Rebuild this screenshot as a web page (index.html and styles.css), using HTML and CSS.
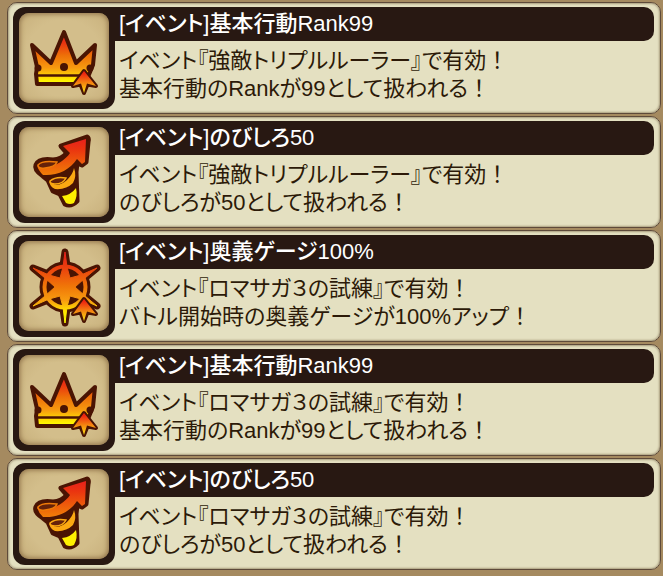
FILE: index.html
```
<!DOCTYPE html>
<html lang="ja">
<head>
<meta charset="utf-8">
<meta name="viewport" content="width=device-width, initial-scale=1">
<title>イベント</title>
<link rel="stylesheet" href="styles.css">
</head>
<body>
<svg class="defs" aria-hidden="true">
  <defs>
    <linearGradient id="fire" gradientUnits="userSpaceOnUse" x1="0" y1="20" x2="0" y2="70">
      <stop offset="0" stop-color="#e8201c"/>
      <stop offset=".2" stop-color="#ea3410"/>
      <stop offset=".45" stop-color="#ee7008"/>
      <stop offset=".7" stop-color="#f79a10"/>
      <stop offset=".9" stop-color="#ffe000"/>
      <stop offset="1" stop-color="#ffff00"/>
    </linearGradient>
    <linearGradient id="glow" gradientUnits="userSpaceOnUse" x1="0" y1="12" x2="0" y2="80">
      <stop offset="0" stop-color="#e8201c"/>
      <stop offset=".15" stop-color="#ea3410"/>
      <stop offset=".5" stop-color="#f07808"/>
      <stop offset=".7" stop-color="#f89c10"/>
      <stop offset=".85" stop-color="#ffe000"/>
      <stop offset="1" stop-color="#ffff00"/>
    </linearGradient>
    <linearGradient id="spark" gradientUnits="userSpaceOnUse" x1="0" y1="60" x2="0" y2="81">
      <stop offset="0" stop-color="#ee2010"/>
      <stop offset=".5" stop-color="#f58a10"/>
      <stop offset="1" stop-color="#ffee10"/>
    </linearGradient>
    <symbol id="boost" viewBox="0 0 90 90">
      <path d="M65 58 L77 73 L68.500 71.500 L65 80 L61.500 71.500 L54 73 Z" fill="#4a1403" stroke="#4a1403" stroke-width="4" stroke-linejoin="round"/>
      <path d="M65 58 L77 73 L68 70.500 L65 80 L62 70.500 L54 73 Z" fill="url(#spark)"/>
    </symbol>
    <symbol id="crown" viewBox="0 0 90 90">
      <g stroke="#4a1403" stroke-width="4" stroke-linejoin="round">
        <path d="M45 19 L57 50 L76 32 L74 52 L69 64 L68 71 H18 L17 61 L18 54 L13 32 L32 50 Z" fill="url(#fire)"/>
        <path d="M17 62.500 H68" fill="none" stroke-width="2.500"/>
      </g>
      <circle cx="45" cy="54" r="4" fill="#4a1403"/>
      <circle cx="19" cy="55" r="3.500" fill="#4a1403"/>
      <circle cx="71" cy="55" r="3.500" fill="#4a1403"/>
      <use href="#boost"/>
    </symbol>
    <symbol id="spiral" viewBox="0 0 90 90">
      <g fill="#4a1403" stroke="#4a1403" stroke-width="5" stroke-linejoin="round">
        <path d="M42 19 L68 10 Q70 11 69 15 L67 35 L63 38 L58 36 L57 45 L58 74 Q52 80 46 77 L41 67 L34 64 L29 53 L24 49 Q15 43 17 38 Q20 31 34 33 Q43 32 48 26 Z"/>
      </g>
      <path d="M43 69 Q52 68 57 61 Q59 69 55 76 Q51 78 47 76 Z" fill="#fff000"/>
      <path d="M30 54 Q38 62 48 53 Q54 47 55 41 Q58 49 54 56 Q47 63 36 62 Q31 60 30 54 Z" fill="#fba812"/>
      <path d="M31 54 Q37 49 47 51 Q44 57 36 57 Q31 57 31 54 Z" fill="#65220a" stroke="#fba812" stroke-width="1.500"/>
      <path d="M44 19 L67 12 L66 35 L63 37 L58 32 C51 43 38 49 24 48 Q19 43 18 38 C29 45 46 34 51 26 Z" fill="url(#glow)"/>
      <path d="M19 38 Q23 33 38 35 Q36 40 26 41 Q19 42 19 38 Z" fill="#65220a" stroke="#ee7a08" stroke-width="1.500"/>
    </symbol>
    <symbol id="wheel" viewBox="0 0 90 90">
      <g fill="#4a1403" stroke="#4a1403" stroke-linejoin="round">
        <circle cx="46" cy="46" r="24" stroke-width="3"/>
        <path d="M46 11 L50 38 L78 27 L55 46 L78 65 L50 54 L46 82 L42 54 L14 65 L37 46 L14 27 L42 38 Z" stroke-width="7"/>
      </g>
      <circle cx="46" cy="46" r="20.500" fill="none" stroke="url(#glow)" stroke-width="4"/>
      <path d="M46 11 L48 26 L51 37 L62 34 L78 27 L66 37 L56 46 L66 55 L78 65 L62 58 L51 55 L48 66 L46 82 L44 66 L41 55 L30 58 L14 65 L26 55 L36 46 L26 37 L14 27 L30 34 L41 37 L44 26 Z" fill="url(#glow)" stroke="url(#glow)" stroke-width="1" stroke-linejoin="round"/>
      <use href="#boost"/>
    </symbol>
  </defs>
</svg>
<ul class="skills">
  <li class="card">
    <div class="frame"><svg class="icon" aria-hidden="true"><use href="#crown"/></svg></div>
    <div class="content">
      <h2 class="title">[イベント]基本行動Rank99</h2>
      <p class="text">イベント『強敵トリプルルーラー』で有効<span class="mark">！</span><br>基本行動のRankが99として扱われる<span class="mark">！</span></p>
    </div>
  </li>
  <li class="card">
    <div class="frame"><svg class="icon" aria-hidden="true"><use href="#spiral"/></svg></div>
    <div class="content">
      <h2 class="title">[イベント]のびしろ50</h2>
      <p class="text">イベント『強敵トリプルルーラー』で有効<span class="mark">！</span><br>のびしろが50として扱われる<span class="mark">！</span></p>
    </div>
  </li>
  <li class="card">
    <div class="frame"><svg class="icon" aria-hidden="true"><use href="#wheel"/></svg></div>
    <div class="content">
      <h2 class="title">[イベント]奥義ゲージ100%</h2>
      <p class="text">イベント『ロマサガ３の試練』で有効<span class="mark">！</span><br>バトル開始時の奥義ゲージが100%アップ<span class="mark">！</span></p>
    </div>
  </li>
  <li class="card">
    <div class="frame"><svg class="icon" aria-hidden="true"><use href="#crown"/></svg></div>
    <div class="content">
      <h2 class="title">[イベント]基本行動Rank99</h2>
      <p class="text">イベント『ロマサガ３の試練』で有効<span class="mark">！</span><br>基本行動のRankが99として扱われる<span class="mark">！</span></p>
    </div>
  </li>
  <li class="card">
    <div class="frame"><svg class="icon" aria-hidden="true"><use href="#spiral"/></svg></div>
    <div class="content">
      <h2 class="title">[イベント]のびしろ50</h2>
      <p class="text">イベント『ロマサガ３の試練』で有効<span class="mark">！</span><br>のびしろが50として扱われる<span class="mark">！</span></p>
    </div>
  </li>
</ul>
</body>
</html>
```
FILE: styles.css
```
* {
  box-sizing: border-box;
}

body {
  margin: 0;
  background: #a58a60;
  font-family: "Liberation Sans", "Noto Sans CJK JP", sans-serif;
  font-feature-settings: "palt";
  color: #2c1a08;
}

.defs {
  position: absolute;
  width: 0;
  height: 0;
}

.skills {
  display: flex;
  flex-direction: column;
  gap: 2px;
  margin: 0;
  padding: 2px 2px 2px 7px;
  list-style: none;
}

.card {
  display: flex;
  padding: 4px 6px 4px 5px;
  border: 1px solid #5e4a3a;
  border-radius: 10px;
  background: #e4e0c1;
  box-shadow: inset 0 0 2px 1px #a89c7c;
}

.frame {
  flex: none;
  width: 102px;
  height: 102px;
  padding: 6px;
  border-radius: 12px 0 12px 12px;
  background: #281812;
}

.icon {
  display: block;
  width: 90px;
  height: 90px;
  border-radius: 10px;
  background: radial-gradient(circle, #d3be8b 60%, #c7af7b);
  box-shadow: inset 0 0 5px 1px #8d7047;
}

.content {
  flex: 1;
  min-width: 0;
}

.title {
  height: 34px;
  margin: 0;
  padding-left: 4px;
  border-radius: 0 10px 10px 0;
  background: #281812;
  color: #fff;
  font-size: 22px;
  font-weight: 500;
  line-height: 34px;
}

.text {
  margin: 0;
  padding: 6px 0 0 4px;
  font-size: 22px;
  font-weight: 400;
  line-height: 28px;
}

.mark {
  font-feature-settings: normal;
}
```
